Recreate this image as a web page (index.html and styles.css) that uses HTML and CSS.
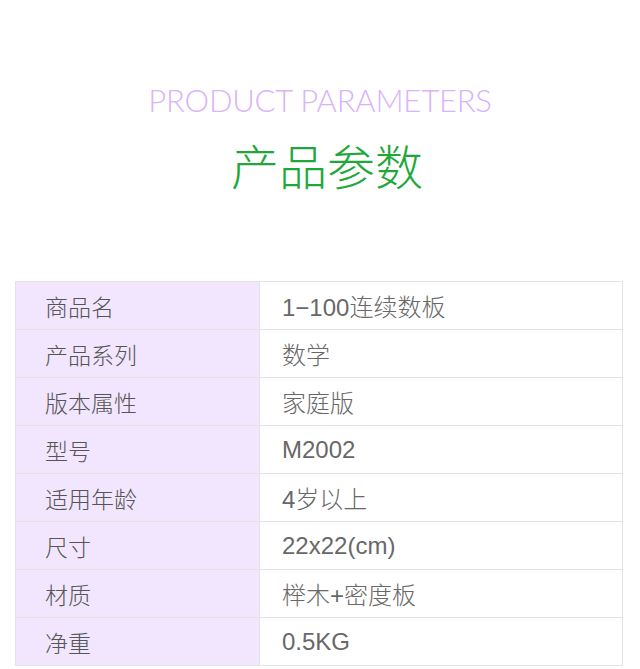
FILE: index.html
```html
<!DOCTYPE html>
<html lang="zh">
<head>
<meta charset="utf-8">
<link rel="stylesheet" href="styles.css">
</head>
<body>
<div class="page">
  <header class="heading">
    <div class="heading-en">PRODUCT PARAMETERS</div>
    <h1 class="heading-cn">产品参数</h1>
  </header>
  <table class="params">
    <tbody>
      <tr><th>商品名</th><td>1−100连续数板</td></tr>
      <tr><th>产品系列</th><td>数学</td></tr>
      <tr><th>版本属性</th><td>家庭版</td></tr>
      <tr><th>型号</th><td>M2002</td></tr>
      <tr><th>适用年龄</th><td>4岁以上</td></tr>
      <tr><th>尺寸</th><td>22x22(cm)</td></tr>
      <tr><th>材质</th><td>榉木+密度板</td></tr>
      <tr><th>净重</th><td>0.5KG</td></tr>
    </tbody>
  </table>
</div>
</body>
</html>
```
FILE: styles.css
```css
html, body {
  margin: 0;
  padding: 0;
  background: #ffffff;
}
.page {
  width: 640px;
  height: 669px;
  overflow: hidden;
  font-family: "Noto Sans CJK SC", "Noto Sans", sans-serif;
}
.heading {
  padding-top: 80px;
  text-align: center;
}
.heading-en {
  font-family: "Lato", "Noto Sans", sans-serif;
  font-weight: 300;
  font-size: 31px;
  line-height: 40px;
  color: #d9b4f7;
  letter-spacing: -0.2px;
}
.heading-cn {
  margin: 12px 0 0;
  padding-left: 14px;
  font-family: "Noto Sans CJK SC", sans-serif;
  font-weight: 300;
  font-size: 48px;
  line-height: 64px;
  color: #1fa83a;
}
.params {
  margin: 85px 0 0 15px;
  width: 608px;
  border-collapse: collapse;
}
.params th, .params td {
  height: 47px;
  padding: 0;
  border: 1px solid #e4e4e4;
  font-size: 23px;
  font-weight: 300;
  color: #555555;
  text-align: left;
  vertical-align: middle;
}
.params th {
  width: 214px;
  padding-left: 29px;
  background: #f1e6fd;
}
.params td {
  padding-left: 22px;
  font-family: "Liberation Sans", "Noto Sans CJK SC", sans-serif;
  font-size: 24px;
  color: #686868;
}
```
